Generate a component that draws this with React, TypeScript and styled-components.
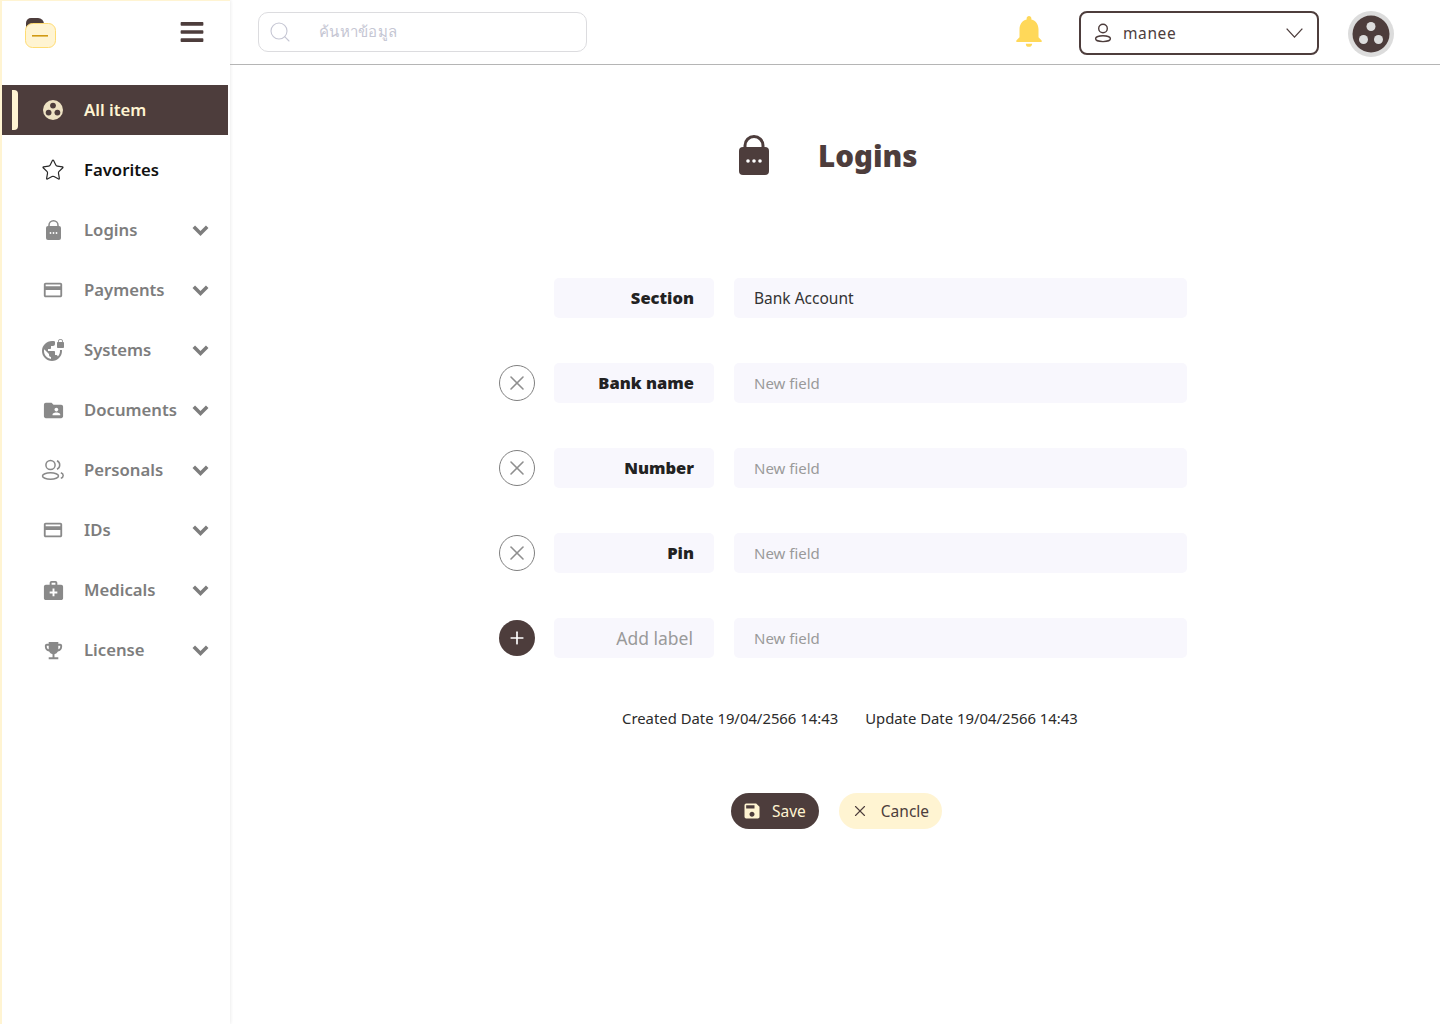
import type { ReactNode } from "react";
import styled, { createGlobalStyle } from "styled-components";
import {
  MdCreditCard,
  MdEmojiEvents,
  MdFolderShared,
  MdMedicalServices,
  MdNotifications,
  MdSave,
  MdVpnLock,
} from "react-icons/md";
import { FaBars } from "react-icons/fa";
import { Plus, Search, Star, X } from "lucide-react";

const dark = "#4d3d3c";
const cream = "#fff4d2";
const grey = "#7d7d7d";
const fieldBg = "#f8f7fd";

const GlobalStyle = createGlobalStyle`
  * { box-sizing: border-box; }
  html, body { margin: 0; padding: 0; background: #fff; }
  body { font-family: "Noto Sans", "Open Sans", sans-serif; }
`;

const Page = styled.div`
  display: flex;
  width: 1440px;
  height: 1024px;
  overflow: hidden;
`;

const Sidebar = styled.aside`
  width: 230px;
  flex-shrink: 0;
  border-left: 2px solid ${cream};
  border-top: 1px solid ${cream};
  box-shadow: 1px 0 3px rgba(0, 0, 0, 0.07);
  display: flex;
  flex-direction: column;
`;

const Brand = styled.div`
  height: 84px;
  padding: 16px 25px 0 22px;
  display: flex;
  justify-content: space-between;
  align-items: flex-start;
  color: ${dark};
  svg.menu {
    margin-top: 2px;
  }
`;

const Nav = styled.nav`
  display: flex;
  flex-direction: column;
  gap: 10px;
  width: 226px;
`;

const NavRow = styled.div<{ $active?: boolean; $strong?: boolean }>`
  position: relative;
  height: 50px;
  display: flex;
  align-items: center;
  font-size: 16.7px;
  font-weight: 600;
  background: ${(p) => (p.$active ? dark : "transparent")};
  color: ${(p) => (p.$active ? cream : p.$strong ? "#111" : grey)};
`;

const NavIcon = styled.span`
  width: 24px;
  height: 24px;
  margin-left: 39px;
  margin-right: 19px;
  display: flex;
  align-items: center;
  justify-content: center;
  color: inherit;
  opacity: 0.9;
`;

const NavLabel = styled.span`
  flex: 1;
  white-space: nowrap;
  margin-bottom: 1px;
`;

const NavChevron = styled.span`
  width: 18px;
  margin-right: 19px;
  display: flex;
  justify-content: center;
  color: ${grey};
`;

const Indicator = styled.span`
  position: absolute;
  left: 10px;
  top: 5px;
  width: 6px;
  height: 40px;
  background: ${cream};
  border-radius: 0 4px 4px 0;
`;

const Main = styled.main`
  flex: 1;
  display: flex;
  flex-direction: column;
`;

const TopBar = styled.header`
  height: 65px;
  border-bottom: 1px solid #b5b5b5;
  padding: 11px 46px 0 28px;
  display: flex;
  align-items: flex-start;
`;

const SearchBox = styled.div`
  width: 329px;
  height: 40px;
  margin-top: 1px;
  border: 1px solid #dcdcdf;
  border-radius: 10px;
  padding-left: 9px;
  display: flex;
  align-items: center;
  color: #c5c6d3;
  font-size: 15px;
  span {
    margin-left: 27px;
    letter-spacing: 0.3px;
    font-family: "Noto Sans", "DejaVu Sans", sans-serif;
  }
`;

const Bell = styled.div`
  margin-left: auto;
  margin-top: 1px;
  margin-right: 31px;
  height: 38px;
  color: #ffd859;
`;

const UserSelect = styled.div`
  width: 240px;
  height: 44px;
  border: 2px solid ${dark};
  border-radius: 8px;
  padding: 0 14px 0 12px;
  display: flex;
  align-items: center;
  color: ${dark};
  font-size: 15.5px;
  letter-spacing: 0.6px;
  span {
    flex: 1;
    margin-left: 10px;
  }
`;

const Avatar = styled.div`
  margin-left: 29px;
  width: 46px;
  height: 46px;
`;

const Content = styled.div`
  padding: 70px 0 0 269px;
  display: flex;
  flex-direction: column;
`;

const TitleRow = styled.div`
  display: flex;
  align-items: center;
  height: 44px;
  margin-left: 240px;
  margin-bottom: 99px;
  color: ${dark};
  svg {
    align-self: flex-start;
  }
`;

const Title = styled.h1`
  margin: 0 0 2px 49px;
  font-size: 29.5px;
  font-weight: 900;
  line-height: 1;
`;

const Rows = styled.div`
  display: flex;
  flex-direction: column;
  gap: 45px;
`;

const Row = styled.div`
  display: grid;
  grid-template-columns: 36px 160px 453px;
  column-gap: 19px;
  align-items: center;
  & > :last-child {
    margin-left: 1px;
  }
`;

const RoundButton = styled.div<{ $filled?: boolean }>`
  width: 36px;
  height: 36px;
  border-radius: 50%;
  display: flex;
  align-items: center;
  justify-content: center;
  border: ${(p) => (p.$filled ? "none" : "1px solid #808080")};
  background: ${(p) => (p.$filled ? dark : "#fff")};
  color: ${(p) => (p.$filled ? "#fff" : "#8f8f8f")};
`;

const Label = styled.div<{ $muted?: boolean }>`
  height: 40px;
  border-radius: 5px;
  background: ${fieldBg};
  padding: ${(p) => (p.$muted ? "0 21px 0 0" : "0 20px 2px 0")};
  display: flex;
  align-items: center;
  justify-content: flex-end;
  font-size: ${(p) => (p.$muted ? "17.5px" : "16.5px")};
  font-weight: ${(p) => (p.$muted ? 400 : 900)};
  color: ${(p) => (p.$muted ? "#9a9a9a" : "#222")};
`;

const Field = styled.div<{ $filled?: boolean }>`
  height: 40px;
  width: 453px;
  border-radius: 5px;
  background: ${fieldBg};
  padding-left: 20px;
  display: flex;
  align-items: center;
  font-size: ${(p) => (p.$filled ? "15.5px" : "15px")};
  color: ${(p) => (p.$filled ? "#333" : "#9a9a9a")};
`;

const Dates = styled.div`
  margin: 50px 0 0 123px;
  display: flex;
  gap: 27px;
  font-size: 14.85px;
  line-height: 20px;
  color: #2b2b2b;
`;

const Actions = styled.div`
  margin: 65px 0 0 232px;
  display: flex;
  gap: 20px;
`;

const ActionButton = styled.div<{ $primary?: boolean }>`
  height: 36px;
  border-radius: 18px;
  display: flex;
  align-items: center;
  gap: ${(p) => (p.$primary ? "10px" : "12px")};
  padding: ${(p) => (p.$primary ? "0 13px 0 11px" : "0 13px 0 12px")};
  font-size: 15.5px;
  background: ${(p) => (p.$primary ? dark : cream)};
  color: ${(p) => (p.$primary ? cream : dark)};
`;

const Dots = ({ size, bg, fg }: { size: number; bg: string; fg: string }) => (
  <svg width={size} height={size} viewBox="0 0 20 20">
    <circle cx="10" cy="10" r="10" fill={bg} />
    <circle cx="10" cy="5.6" r="2.9" fill={fg} />
    <circle cx="5.6" cy="12.6" r="2.9" fill={fg} />
    <circle cx="14.4" cy="12.6" r="2.9" fill={fg} />
  </svg>
);

const Lock = ({ width, height }: { width: number; height: number }) => (
  <svg width={width} height={height} viewBox="0 0 30 40" fill="currentColor">
    <path d="M6 17v-6.5a9 9 0 0 1 18 0v6.5" fill="none" stroke="currentColor" strokeWidth="3" />
    <rect y="12" width="30" height="28" rx="4" />
    <circle cx="9" cy="26" r="1.8" fill="#fff" />
    <circle cx="15" cy="26" r="1.8" fill="#fff" />
    <circle cx="21" cy="26" r="1.8" fill="#fff" />
  </svg>
);

const Person = ({ size }: { size: number }) => (
  <svg width={size} height={size} viewBox="0 0 18 20" fill="none" stroke="currentColor" strokeWidth="1.4">
    <circle cx="9" cy="5.5" r="4.3" />
    <ellipse cx="9" cy="15.7" rx="7.4" ry="2.9" />
  </svg>
);

const People = () => (
  <svg width="24" height="22" viewBox="0 0 24 22" fill="none" stroke="currentColor" strokeWidth="1.5">
    <circle cx="9.5" cy="6" r="4.6" />
    <ellipse cx="9.5" cy="17" rx="8" ry="3.2" />
    <path d="M16 1.8a4.6 4.6 0 0 1 0 8.4M19.8 13.8c3.2 1 3.2 4.4 0 5.6" />
  </svg>
);

const Chevron = ({ width, height, weight }: { width: number; height: number; weight: number }) => (
  <svg width={width} height={height} viewBox={`0 0 ${width} ${height}`} fill="none" stroke="currentColor" strokeWidth={weight}>
    <path d={`M${weight / 2} ${weight / 2}L${width / 2} ${height - weight / 1.4}L${width - weight / 2} ${weight / 2}`} />
  </svg>
);

const Logo = () => (
  <svg width="34" height="32" viewBox="0 0 34 32">
    <path d="M2 14V6a5 5 0 0 1 5-5h7a6 6 0 0 1 6 6v7z" fill={dark} />
    <rect x="1.5" y="6.5" width="30" height="24" rx="7" fill={cream} stroke="#ffdc73" strokeWidth="1" />
    <rect x="8" y="18" width="16" height="1.6" fill="#d19a14" />
  </svg>
);

type NavItem = { label: string; icon: ReactNode; strong?: boolean; chevron?: boolean };

const navItems: NavItem[] = [
  { label: "Favorites", icon: <Star size={24} strokeWidth={1.2} />, strong: true },
  { label: "Logins", icon: <Lock width={15} height={20} />, chevron: true },
  { label: "Payments", icon: <MdCreditCard size={22} />, chevron: true },
  { label: "Systems", icon: <MdVpnLock size={24} />, chevron: true },
  { label: "Documents", icon: <MdFolderShared size={23} />, chevron: true },
  { label: "Personals", icon: <People />, chevron: true },
  { label: "IDs", icon: <MdCreditCard size={22} />, chevron: true },
  { label: "Medicals", icon: <MdMedicalServices size={23} />, chevron: true },
  { label: "License", icon: <MdEmojiEvents size={23} />, chevron: true },
];

const fields = ["Bank name", "Number", "Pin"];

export default function App() {
  return (
    <Page>
      <GlobalStyle />
      <Sidebar>
        <Brand>
          <Logo />
          <FaBars className="menu" size={26} />
        </Brand>
        <Nav>
          <NavRow $active>
            <Indicator />
            <NavIcon>
              <Dots size={20} bg={cream} fg={dark} />
            </NavIcon>
            <NavLabel>All item</NavLabel>
          </NavRow>
          {navItems.map((item) => (
            <NavRow key={item.label} $strong={item.strong}>
              <NavIcon>{item.icon}</NavIcon>
              <NavLabel>{item.label}</NavLabel>
              {item.chevron && (
                <NavChevron>
                  <Chevron width={17} height={11} weight={3.6} />
                </NavChevron>
              )}
            </NavRow>
          ))}
        </Nav>
      </Sidebar>
      <Main>
        <TopBar>
          <SearchBox>
            <Search size={24} strokeWidth={1.1} />
            <span>ค้นหาข้อมูล</span>
          </SearchBox>
          <Bell>
            <MdNotifications size={38} />
          </Bell>
          <UserSelect>
            <Person size={20} />
            <span>manee</span>
            <Chevron width={17} height={10} weight={1.3} />
          </UserSelect>
          <Avatar>
            <svg width="46" height="46" viewBox="0 0 46 46">
              <circle cx="23" cy="23" r="23" fill="#dcdcdc" />
              <circle cx="23" cy="23" r="18.5" fill={dark} />
              <circle cx="23" cy="15.5" r="4.5" fill="#ddd" />
              <circle cx="15.5" cy="28.5" r="4.5" fill="#ddd" />
              <circle cx="30.5" cy="28.5" r="4.5" fill="#ddd" />
            </svg>
          </Avatar>
        </TopBar>
        <Content>
          <TitleRow>
            <Lock width={30} height={40} />
            <Title>Logins</Title>
          </TitleRow>
          <Rows>
            <Row>
              <span />
              <Label>Section</Label>
              <Field $filled>Bank Account</Field>
            </Row>
            {fields.map((name) => (
              <Row key={name}>
                <RoundButton>
                  <X size={24} strokeWidth={1.6} />
                </RoundButton>
                <Label>{name}</Label>
                <Field>New field</Field>
              </Row>
            ))}
            <Row>
              <RoundButton $filled>
                <Plus size={20} strokeWidth={2} />
              </RoundButton>
              <Label $muted>Add label</Label>
              <Field>New field</Field>
            </Row>
          </Rows>
          <Dates>
            <span>Created Date 19/04/2566 14:43</span>
            <span>Update Date 19/04/2566 14:43</span>
          </Dates>
          <Actions>
            <ActionButton $primary>
              <MdSave size={20} />
              Save
            </ActionButton>
            <ActionButton>
              <X size={18} strokeWidth={1.5} />
              Cancle
            </ActionButton>
          </Actions>
        </Content>
      </Main>
    </Page>
  );
}
